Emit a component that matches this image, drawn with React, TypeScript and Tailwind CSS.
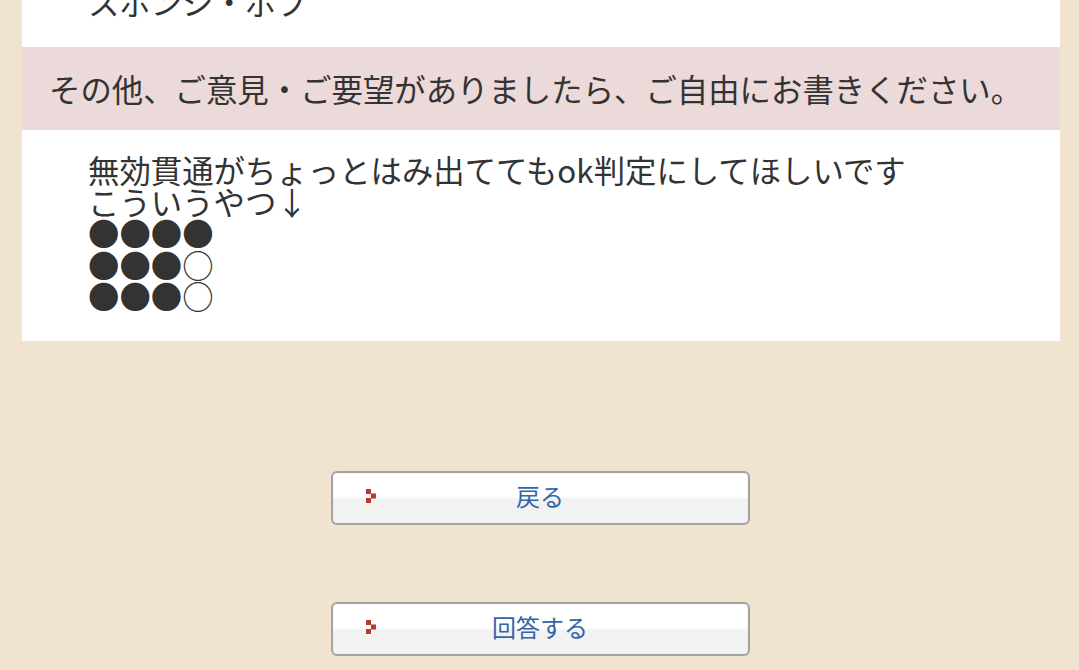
import React from "react";

const font = { fontFamily: '"Noto Sans CJK JP", "Noto Sans", sans-serif' };

function Arrow() {
  return (
    <svg width="12" height="14" viewBox="0 0 12 14" className="shrink-0">
      <rect x="0" y="0" width="5" height="5" fill="#b8392c" />
      <rect x="5" y="4.5" width="5" height="5" fill="#b8392c" />
      <rect x="0" y="9" width="5" height="5" fill="#b8392c" />
    </svg>
  );
}

function Btn({ label }: { label: string }) {
  return (
    <button className="relative w-[419px] h-[54px] rounded-[6px] border-2 border-[#a3a3a3] bg-[linear-gradient(to_bottom,#ffffff_0%,#ffffff_48%,#f2f2f2_52%,#f2f2f2_100%)] shadow-[inset_0_0_1px_#ccc] flex items-center justify-center pb-[3px]">
      <span className="absolute left-[33px] top-[16px]">
        <Arrow />
      </span>
      <span className="text-[24px] leading-none text-[#3465a8]">{label}</span>
    </button>
  );
}

export default function App() {
  return (
    <div className="w-[1079px] h-[670px] overflow-hidden bg-[#f0e4d1] text-[#333333]" style={font}>
      <div className="ml-[22px] w-[1038px] bg-white">
        <div className="h-[47px] pl-[66px] overflow-hidden">
          <div className="text-[31.4px] leading-[31.5px] mt-[-14px]">スポンジ・ボブ</div>
        </div>
        <div className="h-[83px] bg-[#ecd9d9] flex items-center pl-[27px] text-[31.4px] leading-none">
          その他、ご意見・ご要望がありましたら、ご自由にお書きください。
        </div>
        <div className="pl-[66px] pt-[24px] pb-[29px] text-[31.4px] leading-[31.5px] whitespace-pre">
          {"無効貫通がちょっとはみ出ててもok判定にしてほしいです\nこういうやつ↓\n●●●●\n●●●○\n●●●○"}
        </div>
      </div>
      <div className="flex flex-col items-center gap-[77px] pt-[130px] pl-px">
        <Btn label="戻る" />
        <Btn label="回答する" />
      </div>
    </div>
  );
}
